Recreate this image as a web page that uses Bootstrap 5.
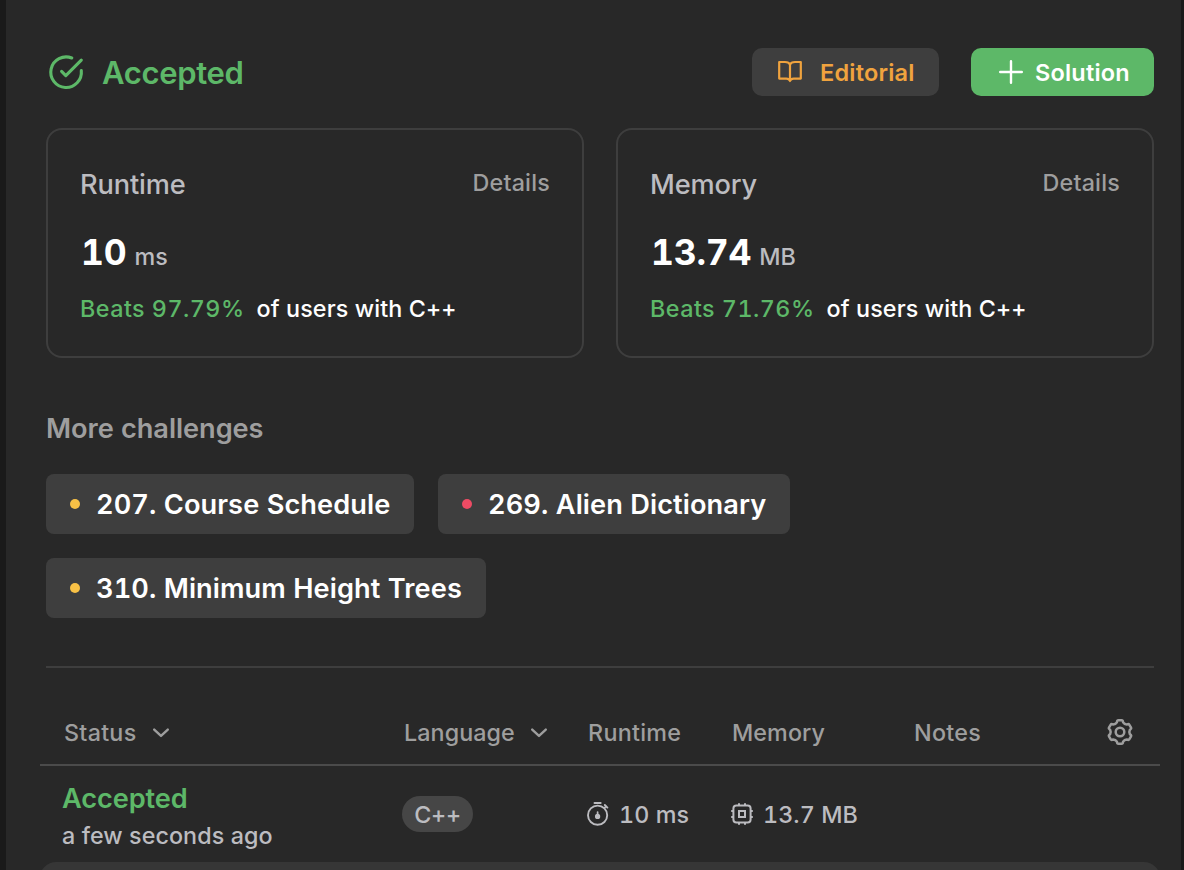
<!DOCTYPE html>
<html lang="en">
<head>
<meta charset="utf-8">
<meta name="viewport" content="width=device-width, initial-scale=1">
<title>Submission result</title>
<link href="https://cdn.jsdelivr.net/npm/bootstrap@5.3.0/dist/css/bootstrap.min.css" rel="stylesheet">
<style>
  body { background: #1a1a1a; font-family: Inter, "Liberation Sans", sans-serif; font-weight: 450; font-variant-numeric: tabular-nums; color: #fff; height: 870px; overflow: hidden; white-space: nowrap; }
  svg { display: block; flex: none; }
  .panel { background: #282828; margin: 0 3px 0 6px; height: 870px; padding: 48px 27px 0 40px; overflow: hidden; }
  .green { color: #5db868; }
  .soft { color: #bcbcc0; }
  .dim { color: #9e9e9e; }
  .topbar { height: 48px; }
  .verdict { font-size: 31px; font-weight: 600; margin-left: 16px; letter-spacing: -.35px; line-height: 48px; padding-top: 2px; }
  .actions { gap: 32px; }
  .action { height: 48px; border: 0; border-radius: 10px; font-size: 23.5px; font-weight: 600; padding: 0; line-height: 46px; letter-spacing: .2px; }
  .action span { padding-top: 2px; }
  .action-editorial { background: #3e3e3e; color: #f0a33e; width: 187px; padding-left: 25px; gap: 17px; }
  .action-solution { background: #5db868; color: #fff; width: 183px; padding-left: 27px; gap: 11px; }
  .action-editorial:hover { background: #4a4a4a; color: #f0a33e; }
  .action-solution:hover { background: #54a85e; color: #fff; }
  .stats { margin-top: 32px; gap: 32px; }
  .stat { flex: 1 1 0; height: 230px; border: 2px solid #3e3e3e; border-radius: 16px; padding: 32px; }
  .stat-title { font-size: 27.2px; line-height: 44px; padding-top: 1px; letter-spacing: -.15px; }
  .stat-link { font-size: 23.3px; line-height: 41px; letter-spacing: .2px; }
  .stat-value { margin-top: 20px; height: 52px; line-height: 52px; }
  .stat-num { font-size: 35.5px; font-weight: 650; margin-left: 1px; letter-spacing: -.2px; }
  .stat-unit { font-size: 23.3px; margin-left: 8px; }
  .stat-beats { margin-top: 15px; font-size: 23.3px; line-height: 29px; letter-spacing: .12px; gap: 12px; }
  .stat-beats .green { font-weight: 550; letter-spacing: .48px; }
  .section-title { font-size: 27.2px; font-weight: 600; line-height: 40px; margin-top: 51px; letter-spacing: -.05px; }
  .chips { margin-top: 25px; gap: 24px; }
  .chip { height: 60px; border-radius: 8px; background: #3e3e3e; font-size: 27.2px; font-weight: 600; line-height: 58px; padding: 0 24px; gap: 16px; letter-spacing: .08px; }
  .chip span { padding-top: 2px; }
  .dot { width: 10px; height: 10px; border-radius: 50%; flex: none; }
  .dot-medium { background: #f8c146; }
  .dot-hard { background: #ee4b64; }
  .chip-207 { width: 368px; }
  .chip-269 { width: 352px; }
  .chip-310 { width: 440px; }
  .rule { height: 2px; background: #3e3e3e; margin-top: 48px; }
  .sub-table { margin: 0 -6px; }
  .sub-grid { display: grid; grid-template-columns: 340px 184px 144px 182px 1fr; align-items: center; }
  .sub-head { height: 98px; padding: 35px 26px 0 24px; font-size: 23.3px; letter-spacing: .08px; border-bottom: 2px solid #4b4b4b; }
  .sub-head .wide { letter-spacing: .28px; }
  .sub-head .gear { margin-bottom: 3px; }
  .sub-head .chevron { margin: 0 0 1px 15px; }
  .sub-row { height: 96px; padding: 0 22px; font-size: 23.3px; letter-spacing: .08px; }
  .sub-first { padding-top: 7px; }
  .sub-status { font-size: 27.2px; font-weight: 600; line-height: 36px; letter-spacing: -.1px; }
  .sub-when { line-height: 38px; }
  .lang { background: #464646; width: 71px; height: 36px; line-height: 36px; border-radius: 18px; padding-top: 1px; letter-spacing: -.2px; }
  .metric { gap: 9px; }
  .metric span { padding-top: 2px; }
  .sub-next { background: #363636; height: 96px; border-radius: 16px; }
</style>
</head>
<body>
<main class="panel">
  <header class="topbar d-flex align-items-center">
    <svg width="40" height="40" viewBox="0 0 40 40" fill="none" stroke="#5db868" stroke-width="3.1" stroke-linecap="round" stroke-linejoin="round">
      <path d="M25.800 6A15.300 15.300 0 1 0 35.300 18.600M35.300 8.200L19.800 23.600L15.600 19.400"/>
    </svg>
    <h1 class="verdict green mb-0">Accepted</h1>
    <div class="actions d-flex ms-auto">
      <button class="btn action action-editorial d-flex align-items-center">
        <svg width="26" height="26" viewBox="0 0 26 26" fill="none" stroke="#f0a33e" stroke-width="2.2" stroke-linejoin="round" stroke-linecap="round">
          <path d="M13 5.600C12 3.200 10.600 3 8 3H2.200V19.600H9.400C11.400 19.600 12.400 20.200 13 22C13.600 20.200 14.600 19.600 16.600 19.600H23.800V3H18C15.400 3 14 3.200 13 5.600ZM13 5.600V22"/>
        </svg>
        <span>Editorial</span>
      </button>
      <button class="btn action action-solution d-flex align-items-center">
        <svg width="26" height="26" viewBox="0 0 26 26" fill="none" stroke="#fff" stroke-width="2.4" stroke-linecap="round"><path d="M13 2.200V23.800M2.200 13H23.800"/></svg>
        <span>Solution</span>
      </button>
    </div>
  </header>

  <section class="stats d-flex">
    <div class="stat">
      <div class="d-flex justify-content-between align-items-start">
        <span class="stat-title soft">Runtime</span><span class="stat-link dim">Details</span>
      </div>
      <div class="stat-value d-flex align-items-baseline"><span class="stat-num">10</span><span class="stat-unit soft">ms</span></div>
      <div class="stat-beats d-flex"><span class="green">Beats 97.79%</span><span>of users with C++</span></div>
    </div>
    <div class="stat">
      <div class="d-flex justify-content-between align-items-start">
        <span class="stat-title soft">Memory</span><span class="stat-link dim">Details</span>
      </div>
      <div class="stat-value d-flex align-items-baseline"><span class="stat-num">13.74</span><span class="stat-unit soft">MB</span></div>
      <div class="stat-beats d-flex"><span class="green">Beats 71.76%</span><span>of users with C++</span></div>
    </div>
  </section>

  <h2 class="section-title dim mb-0">More challenges</h2>
  <div class="chips d-flex flex-wrap">
    <div class="chip chip-207 d-flex align-items-center"><i class="dot dot-medium"></i><span>207. Course Schedule</span></div>
    <div class="chip chip-269 d-flex align-items-center"><i class="dot dot-hard"></i><span>269. Alien Dictionary</span></div>
    <div class="chip chip-310 d-flex align-items-center"><i class="dot dot-medium"></i><span>310. Minimum Height Trees</span></div>
  </div>
  <div class="rule"></div>

  <section class="sub-table">
    <div class="sub-grid sub-head dim">
      <div class="d-flex align-items-center"><span class="wide">Status</span>
        <svg class="chevron" width="18" height="12" viewBox="0 0 18 12" fill="none" stroke="#9e9e9e" stroke-width="2.400" stroke-linecap="round" stroke-linejoin="round"><path d="M2.200 2.600L9 8.900L15.800 2.600"/></svg></div>
      <div class="d-flex align-items-center"><span>Language</span>
        <svg class="chevron" width="18" height="12" viewBox="0 0 18 12" fill="none" stroke="#9e9e9e" stroke-width="2.400" stroke-linecap="round" stroke-linejoin="round"><path d="M2.200 2.600L9 8.900L15.800 2.600"/></svg></div>
      <span class="wide">Runtime</span><span>Memory</span>
      <div class="d-flex justify-content-between align-items-center"><span class="wide">Notes</span>
        <svg class="gear" width="28" height="28" viewBox="-14 -14 28 28" fill="none" stroke="#9e9e9e" stroke-width="2.500" stroke-linejoin="round">
          <circle r="4.300"/>
          <path d="M-3.100-9.600Q-2.900-11.700-1.600-11.700H1.600Q2.900-11.700 3.100-9.600Q4.400-7.600 6.760-7.480Q8.680-8.360 9.230-7.410L11.030-4.290Q11.580-3.340 9.860-2.120Q8.800 0 9.860 2.120Q11.580 3.340 11.030 4.290L9.230 7.410Q8.680 8.360 6.760 7.480Q4.400 7.600 3.100 9.600Q2.900 11.700 1.600 11.700H-1.600Q-2.900 11.700-3.100 9.600Q-4.400 7.600-6.760 7.480Q-8.680 8.360-9.230 7.410L-11.030 4.290Q-11.580 3.340-9.860 2.120Q-8.800 0-9.860-2.120Q-11.580-3.340-11.030-4.290L-9.230-7.410Q-8.680-8.360-6.760-7.480Q-4.400-7.600-3.100-9.600Z"/>
        </svg></div>
    </div>
    <div class="sub-grid sub-row soft">
      <div class="sub-first"><div class="sub-status green">Accepted</div><div class="sub-when">a few seconds ago</div></div>
      <div><div class="lang text-center">C++</div></div>
      <div class="metric d-flex align-items-center">
        <svg width="24" height="26" viewBox="0 0 24 26" fill="none" stroke="#bcbcc0" stroke-width="1.900" stroke-linecap="round">
          <circle cx="11.600" cy="14.200" r="9.600"/><path d="M8.500 2H14.700M18.800 4L21.400 6.600M18.700 6.700L20.200 5.200"/><path d="M11.600 11V15" stroke-width="1.700"/><circle cx="11.600" cy="15.400" r="1.700" fill="#bcbcc0"/>
        </svg><span>10 ms</span></div>
      <div class="metric d-flex align-items-center">
        <svg width="24" height="26" viewBox="0 0 24 26" fill="none" stroke="#bcbcc0" stroke-width="2">
          <rect x="3.400" y="4.400" width="17.200" height="17.200" rx="3"/><rect x="9" y="10" width="6" height="6"/><path d="M9 2.200V4.400M15 2.200V4.400M9 21.600V23.800M15 21.600V23.800M1.200 10H3.400M1.200 16H3.400M20.600 10H22.800M20.600 16H22.800"/>
        </svg><span>13.7 MB</span></div>
    </div>
    <div class="sub-next"></div>
  </section>
</main>
<script src="https://cdn.jsdelivr.net/npm/bootstrap@5.3.0/dist/js/bootstrap.bundle.min.js"></script>
</body>
</html>
